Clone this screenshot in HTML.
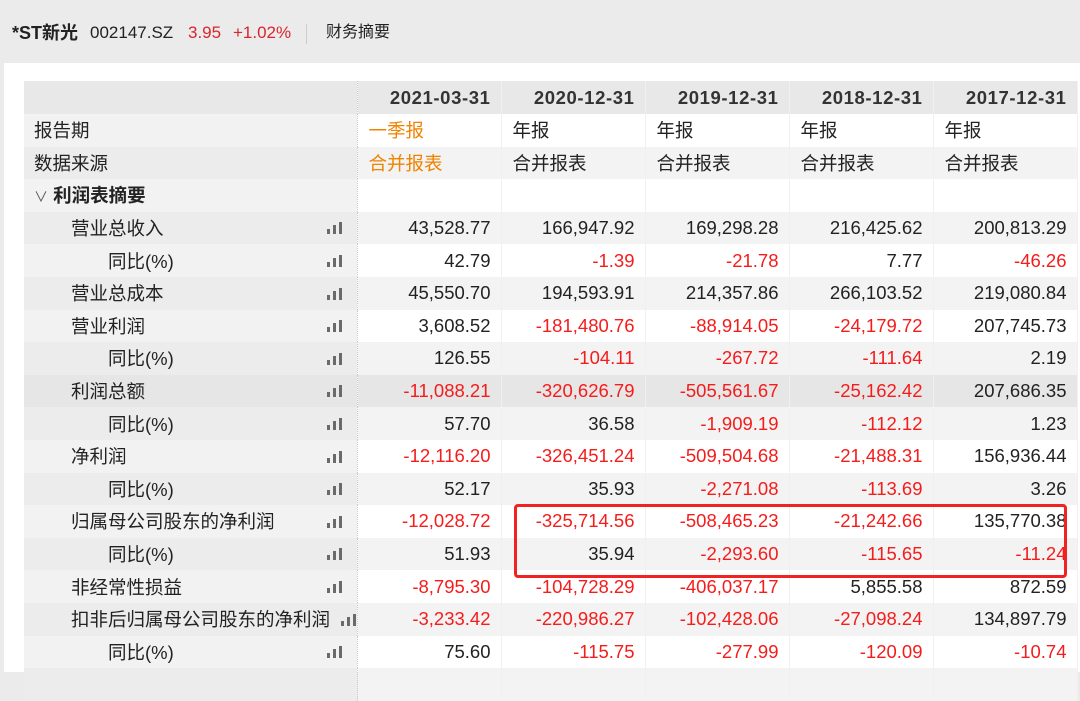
<!DOCTYPE html>
<html><head><meta charset="utf-8"><style>
body{margin:0;width:1080px;height:672px;overflow:hidden;background:#ebebeb;font-family:"Liberation Sans","Noto Sans CJK SC",sans-serif;color:#222;position:relative}
.top{position:absolute;left:0;top:0;width:1080px;height:63px}
.top span{position:absolute;top:22px;font-size:17px;line-height:22px}
.card{position:absolute;left:4px;top:63px;width:1076px;height:609px;background:#fff}
table{position:absolute;left:24px;top:81px;border-collapse:collapse;table-layout:fixed;width:1053px}
td{height:32.6px;padding:0;font-size:18.5px;white-space:nowrap;overflow:hidden;box-sizing:border-box}
td.l{width:333px;position:relative;border-right:1px dotted #ccc}
td.n{width:144px;text-align:right;padding-right:10px;border-right:1px solid #f0f0f0}
td.t{text-align:left;padding-left:11px}
tr.h td{height:33px;background:#e8e8e8;font-weight:bold;font-size:18.5px;letter-spacing:0.6px;color:#333}
tr.w td{background:#fff}tr.w td.l{background:#f2f2f2}
tr.g td{background:#f3f3f3}tr.g td.l{background:#ececec}
tr.s td{background:#e6e6e6}
.r{color:#f51c1c}.o{color:#f08300}
.i1{padding-left:10px}.i2{padding-left:47px}.i3{padding-left:84px}
.b{position:absolute;right:15px;bottom:10px;width:15px;height:12px}
.b i{position:absolute;bottom:0;width:3px;background:#6a6a6a}
</style></head><body>
<div class="top">
<span style="left:12px;font-weight:bold;font-size:18px">*ST新光</span>
<span style="left:90px">002147.SZ</span>
<span style="left:188px;color:#d7262e">3.95</span>
<span style="left:233px;color:#d7262e">+1.02%</span>
<div style="position:absolute;left:306px;top:24px;width:1px;height:20px;background:#ccc"></div>
<span style="left:326px;font-size:16px">财务摘要</span>
</div>
<div class="card"></div>
<table>
<tr class="h"><td class="l"></td><td class="n o">2021-03-31</td><td class="n">2020-12-31</td><td class="n">2019-12-31</td><td class="n">2018-12-31</td><td class="n">2017-12-31</td></tr>
<tr class="w"><td class="l i1">报告期</td><td class="n t o">一季报</td><td class="n t">年报</td><td class="n t">年报</td><td class="n t">年报</td><td class="n t">年报</td></tr>
<tr class="g"><td class="l i1">数据来源</td><td class="n t o">合并报表</td><td class="n t">合并报表</td><td class="n t">合并报表</td><td class="n t">合并报表</td><td class="n t">合并报表</td></tr>
<tr class="w"><td class="l" style="padding-left:10px;font-weight:bold"><span style="font-weight:normal;color:#555;font-size:14px">∨</span> 利润表摘要</td><td class="n"></td><td class="n"></td><td class="n"></td><td class="n"></td><td class="n"></td></tr>
<tr class="g"><td class="l i2">营业总收入<span class="b"><i style="left:0;height:5px"></i><i style="left:6px;height:9px"></i><i style="left:12px;height:12px"></i></span></td><td class="n">43,528.77</td><td class="n">166,947.92</td><td class="n">169,298.28</td><td class="n">216,425.62</td><td class="n">200,813.29</td></tr>
<tr class="w"><td class="l i3">同比(%)<span class="b"><i style="left:0;height:5px"></i><i style="left:6px;height:9px"></i><i style="left:12px;height:12px"></i></span></td><td class="n">42.79</td><td class="n r">-1.39</td><td class="n r">-21.78</td><td class="n">7.77</td><td class="n r">-46.26</td></tr>
<tr class="g"><td class="l i2">营业总成本<span class="b"><i style="left:0;height:5px"></i><i style="left:6px;height:9px"></i><i style="left:12px;height:12px"></i></span></td><td class="n">45,550.70</td><td class="n">194,593.91</td><td class="n">214,357.86</td><td class="n">266,103.52</td><td class="n">219,080.84</td></tr>
<tr class="w"><td class="l i2">营业利润<span class="b"><i style="left:0;height:5px"></i><i style="left:6px;height:9px"></i><i style="left:12px;height:12px"></i></span></td><td class="n">3,608.52</td><td class="n r">-181,480.76</td><td class="n r">-88,914.05</td><td class="n r">-24,179.72</td><td class="n">207,745.73</td></tr>
<tr class="g"><td class="l i3">同比(%)<span class="b"><i style="left:0;height:5px"></i><i style="left:6px;height:9px"></i><i style="left:12px;height:12px"></i></span></td><td class="n">126.55</td><td class="n r">-104.11</td><td class="n r">-267.72</td><td class="n r">-111.64</td><td class="n">2.19</td></tr>
<tr class="s"><td class="l i2">利润总额<span class="b"><i style="left:0;height:5px"></i><i style="left:6px;height:9px"></i><i style="left:12px;height:12px"></i></span></td><td class="n r">-11,088.21</td><td class="n r">-320,626.79</td><td class="n r">-505,561.67</td><td class="n r">-25,162.42</td><td class="n">207,686.35</td></tr>
<tr class="g"><td class="l i3">同比(%)<span class="b"><i style="left:0;height:5px"></i><i style="left:6px;height:9px"></i><i style="left:12px;height:12px"></i></span></td><td class="n">57.70</td><td class="n">36.58</td><td class="n r">-1,909.19</td><td class="n r">-112.12</td><td class="n">1.23</td></tr>
<tr class="w"><td class="l i2">净利润<span class="b"><i style="left:0;height:5px"></i><i style="left:6px;height:9px"></i><i style="left:12px;height:12px"></i></span></td><td class="n r">-12,116.20</td><td class="n r">-326,451.24</td><td class="n r">-509,504.68</td><td class="n r">-21,488.31</td><td class="n">156,936.44</td></tr>
<tr class="g"><td class="l i3">同比(%)<span class="b"><i style="left:0;height:5px"></i><i style="left:6px;height:9px"></i><i style="left:12px;height:12px"></i></span></td><td class="n">52.17</td><td class="n">35.93</td><td class="n r">-2,271.08</td><td class="n r">-113.69</td><td class="n">3.26</td></tr>
<tr class="w"><td class="l i2">归属母公司股东的净利润<span class="b"><i style="left:0;height:5px"></i><i style="left:6px;height:9px"></i><i style="left:12px;height:12px"></i></span></td><td class="n r">-12,028.72</td><td class="n r">-325,714.56</td><td class="n r">-508,465.23</td><td class="n r">-21,242.66</td><td class="n">135,770.38</td></tr>
<tr class="g"><td class="l i3">同比(%)<span class="b"><i style="left:0;height:5px"></i><i style="left:6px;height:9px"></i><i style="left:12px;height:12px"></i></span></td><td class="n">51.93</td><td class="n">35.94</td><td class="n r">-2,293.60</td><td class="n r">-115.65</td><td class="n r">-11.24</td></tr>
<tr class="w"><td class="l i2">非经常性损益<span class="b"><i style="left:0;height:5px"></i><i style="left:6px;height:9px"></i><i style="left:12px;height:12px"></i></span></td><td class="n r">-8,795.30</td><td class="n r">-104,728.29</td><td class="n r">-406,037.17</td><td class="n">5,855.58</td><td class="n">872.59</td></tr>
<tr class="g"><td class="l i2">扣非后归属母公司股东的净利润<span class="b" style="right:1px"><i style="left:0;height:5px"></i><i style="left:6px;height:9px"></i><i style="left:12px;height:12px"></i></span></td><td class="n r">-3,233.42</td><td class="n r">-220,986.27</td><td class="n r">-102,428.06</td><td class="n r">-27,098.24</td><td class="n">134,897.79</td></tr>
<tr class="w"><td class="l i3">同比(%)<span class="b"><i style="left:0;height:5px"></i><i style="left:6px;height:9px"></i><i style="left:12px;height:12px"></i></span></td><td class="n">75.60</td><td class="n r">-115.75</td><td class="n r">-277.99</td><td class="n r">-120.09</td><td class="n r">-10.74</td></tr>
<tr class="g"><td class="l"></td><td class="n"></td><td class="n"></td><td class="n"></td><td class="n"></td><td class="n"></td></tr>
</table>
<div style="position:absolute;left:514px;top:504px;width:553px;height:74px;box-sizing:border-box;border:3px solid #f22222;border-radius:4px"></div>
</body></html>
